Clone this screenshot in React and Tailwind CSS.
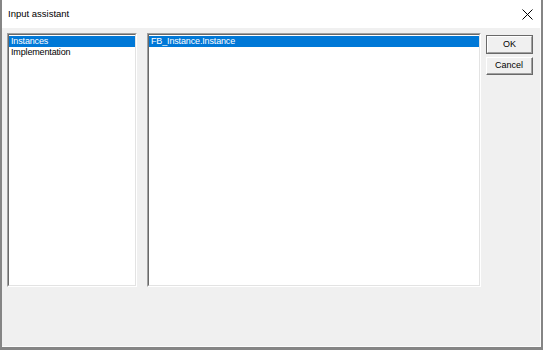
import React from "react";

function ListBox({ className, items }) {
  return (
    <div className={"border-t border-l border-[#a0a0a0] border-r border-b border-r-white border-b-white " + className}>
      <div className="h-full border-t border-l border-[#696969] border-r border-b border-r-[#e3e3e3] border-b-[#e3e3e3] bg-white pt-[1px]">
        {items.map((it, i) => (
          <div
            key={i}
            className={
              "h-[11px] leading-[11px] pl-[2px] text-[9px] tracking-[-0.15px] whitespace-nowrap " +
              (i === 0 ? "bg-[#0078d7] text-white" : "text-black")
            }
          >
            {it}
          </div>
        ))}
      </div>
    </div>
  );
}

function Btn({ children, isDefault }) {
  if (isDefault) {
    return (
      <div className="w-[47px] h-[19px] border border-[#696969]">
        <div className="h-full border-t border-l border-white border-r border-b border-r-[#a0a0a0] border-b-[#a0a0a0] bg-[#f0f0f0] flex items-center justify-center text-[9px] text-black">
          {children}
        </div>
      </div>
    );
  }
  return (
    <div className="w-[47px] h-[18px] border-t border-l border-white border-r border-b border-r-[#696969] border-b-[#696969]">
      <div className="h-full border-r border-b border-[#a0a0a0] bg-[#f0f0f0] flex items-center justify-center text-[9px] text-black">
        {children}
      </div>
    </div>
  );
}

export default function App() {
  return (
    <div
      className="w-[543px] h-[350px] flex flex-col border-l-2 border-r-2 border-b-[3px] border-[#858585] bg-white"
      style={{ fontFamily: '"Liberation Sans", Arial, sans-serif' }}
    >
      <div className="h-[28px] shrink-0 bg-white flex items-center justify-between pl-[6px] pr-[8px]">
        <span className="text-[9.5px] text-black">Input assistant</span>
        <svg width="11" height="11" viewBox="0 0 11 11" className="mt-[1px]">
          <path d="M0.5 0.5 L10.5 10.5 M10.5 0.5 L0.5 10.5" stroke="#000" strokeWidth="1" fill="none" />
        </svg>
      </div>
      <div className="flex-1 bg-[#f0f0f0] border-r border-b border-[#fcfcfc] flex items-start pt-[5px] pl-[5px]">
        <ListBox className="w-[130px] h-[254px]" items={["Instances", "Implementation"]} />
        <ListBox className="w-[334px] h-[254px] ml-[10px]" items={["FB_Instance.Instance"]} />
        <div className="ml-[5px] flex flex-col gap-[3px] pt-[2px]">
          <Btn isDefault>OK</Btn>
          <Btn>Cancel</Btn>
        </div>
      </div>
    </div>
  );
}
